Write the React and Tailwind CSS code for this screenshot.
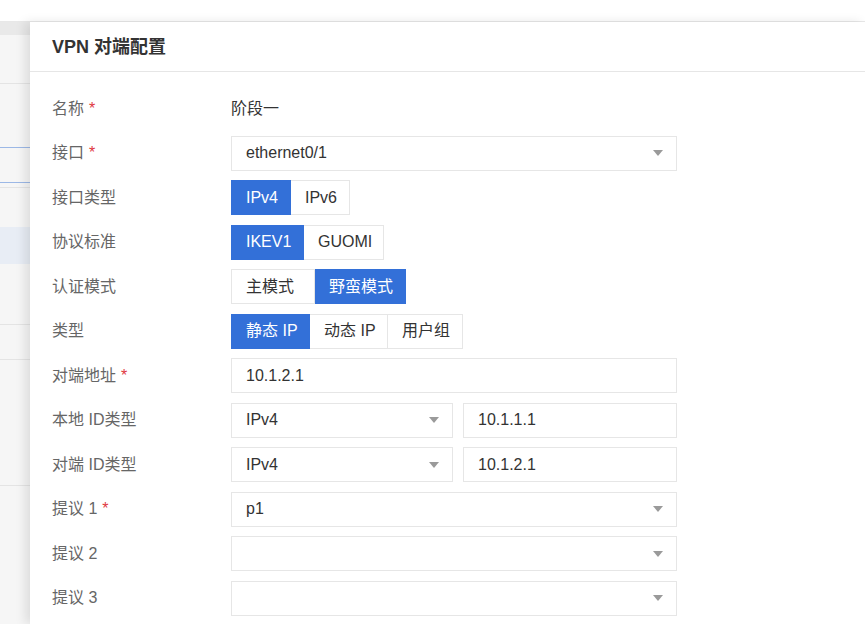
import React from 'react';

const font = { fontFamily: '"Liberation Sans", "Noto Sans CJK SC", sans-serif' };

const Caret = () => (
    <svg width="10" height="6" viewBox="0 0 10 6" className="shrink-0">
        <path d="M0 0 L10 0 L5 6 Z" fill="#9a9a9a" />
    </svg>
);

const Select = ({ value, className = '' }) => (
    <div className={`h-[35px] border border-[#e6e6e6] bg-white flex items-center justify-between pl-[14px] pr-[13px] text-[#333] ${className}`}>
        <span>{value}</span>
        <Caret />
    </div>
);

const Input = ({ value, className = '' }) => (
    <div className={`h-[35px] border border-[#e6e6e6] bg-white flex items-center px-[14px] text-[#333] ${className}`}>
        {value}
    </div>
);

const Segments = ({ items, active, widths }) => (
    <div className="flex h-[35px]">
        {items.map((item, i) => (
            <div
                key={item}
                style={{ width: widths[i] }}
                className={`shrink-0 whitespace-nowrap flex items-center pl-[14px] border ${i > 0 ? 'border-l-0' : ''} ${
                    i === active
                        ? 'bg-[#3370d8] border-[#3370d8] text-white'
                        : 'bg-white border-[#e6e6e6] text-[#333]'
                }`}
            >
                {item}
            </div>
        ))}
    </div>
);

const Row = ({ label, required, children }) => (
    <div className="flex items-center h-[35px]">
        <div className="w-[179px] shrink-0 text-[#666]">
            {label}
            {required && <span className="text-[#e0393e] ml-[5px]">*</span>}
        </div>
        <div className="w-[446px]">{children}</div>
    </div>
);

export default function App() {
    return (
        <div className="w-[865px] h-[624px] overflow-hidden bg-white flex flex-col text-[16px]" style={font}>
            <div className="h-[22px] shrink-0 border-b border-[#e8e8e8] bg-white" />
            <div className="flex flex-1 min-h-0">
                {/* background list peeking out on the left */}
                <div className="w-[30px] shrink-0 bg-[#f6f6f6] flex flex-col">
                    <div className="h-[13px] bg-[#e9e9e9]" />
                    <div className="h-[49px] border-b border-[#e4e4e4]" />
                    <div className="h-[64px] border-b border-[#9cb8e6]" />
                    <div className="h-[35px] border-b border-[#9cb8e6]" />
                    <div className="h-[5px] border-b border-[#e4e4e4]" />
                    <div className="h-[39px]" />
                    <div className="h-[37px] bg-[#e8edf5]" />
                    <div className="h-[61px] border-b border-[#e4e4e4]" />
                    <div className="h-[35px] border-b border-[#e4e4e4]" />
                    <div className="h-[126px] border-b border-[#e4e4e4]" />
                </div>
                <div className="flex-1 bg-white flex flex-col shadow-[-5px_0_10px_rgba(0,0,0,0.10)] z-10">
                    <div className="h-[50px] shrink-0 border-b border-[#e6e6e6] flex items-center px-[22px] pt-[2px]">
                        <span className="text-[18px] font-bold text-[#333]">VPN 对端配置</span>
                    </div>
                    <div className="flex flex-col gap-[9.5px] px-[22px] pt-[19px]">
                        <Row label="名称" required>
                            <span className="text-[#333]">阶段一</span>
                        </Row>
                        <Row label="接口" required>
                            <Select value="ethernet0/1" />
                        </Row>
                        <Row label="接口类型">
                            <Segments items={['IPv4', 'IPv6']} active={0} widths={[60, 59]} />
                        </Row>
                        <Row label="协议标准">
                            <Segments items={['IKEV1', 'GUOMI']} active={0} widths={[73, 80]} />
                        </Row>
                        <Row label="认证模式">
                            <Segments items={['主模式', '野蛮模式']} active={1} widths={[84, 91]} />
                        </Row>
                        <Row label="类型">
                            <Segments items={['静态 IP', '动态 IP', '用户组']} active={0} widths={[79, 78, 75]} />
                        </Row>
                        <Row label="对端地址" required>
                            <Input value="10.1.2.1" />
                        </Row>
                        <Row label="本地 ID类型">
                            <div className="flex gap-[10px]">
                                <Select value="IPv4" className="w-[222px]" />
                                <Input value="10.1.1.1" className="flex-1" />
                            </div>
                        </Row>
                        <Row label="对端 ID类型">
                            <div className="flex gap-[10px]">
                                <Select value="IPv4" className="w-[222px]" />
                                <Input value="10.1.2.1" className="flex-1" />
                            </div>
                        </Row>
                        <Row label="提议 1" required>
                            <Select value="p1" />
                        </Row>
                        <Row label="提议 2">
                            <Select value="" />
                        </Row>
                        <Row label="提议 3">
                            <Select value="" />
                        </Row>
                    </div>
                </div>
            </div>
        </div>
    );
}
